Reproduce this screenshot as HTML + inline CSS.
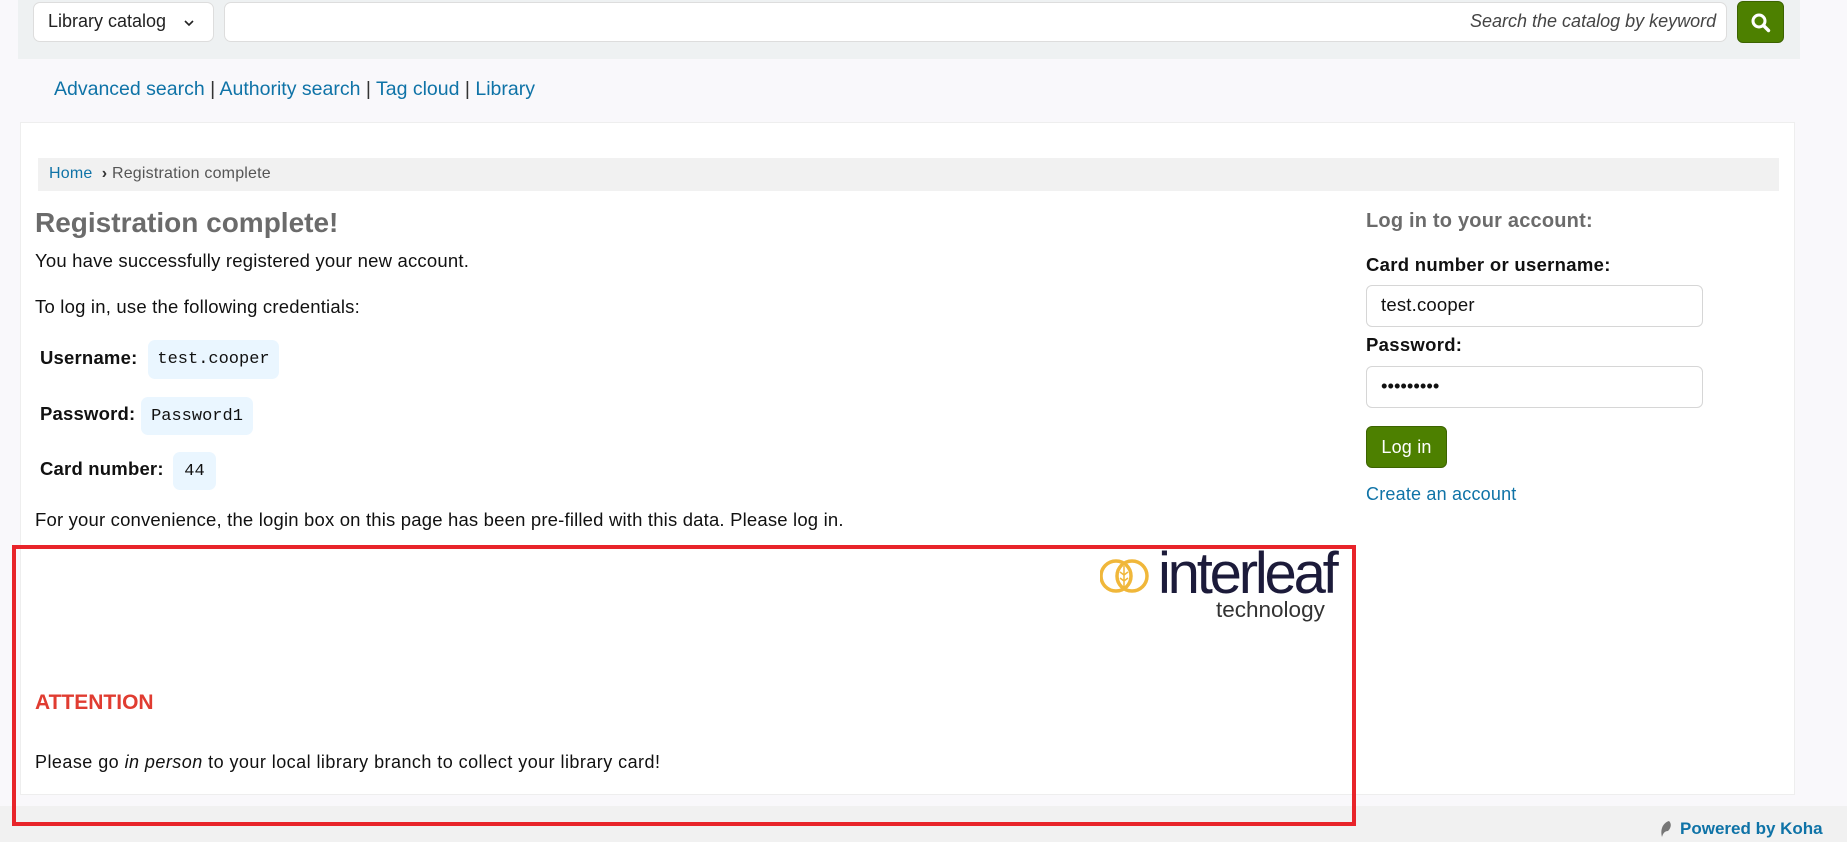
<!DOCTYPE html>
<html><head><meta charset="utf-8"><style>
*{box-sizing:border-box;margin:0;padding:0}
body{width:1847px;height:842px;overflow:hidden;background:#f9f8fb;font-family:"Liberation Sans",sans-serif;color:#111;position:relative;font-size:18.5px;letter-spacing:0.2px}
.a{position:absolute;white-space:nowrap}
a{color:#0f73a7;text-decoration:none}
.code{position:absolute;background:#eaf6ff;border-radius:7px;font-family:"Liberation Mono",monospace;font-size:17px;letter-spacing:0;display:flex;align-items:center;justify-content:center}
.inp{position:absolute;background:#fff;border:1px solid #d6d6d6;border-radius:6px}
b{font-weight:bold}
</style></head><body>
<div class="a" style="left:18px;top:0;width:1782px;height:59px;background:#eef1f2"></div>
<div class="inp" style="left:33px;top:2px;width:181px;height:40px;border-color:#ddd;border-radius:7px"></div>
<div class="a" style="left:48px;top:11px;font-size:18px;color:#222;letter-spacing:0">Library catalog</div>
<svg class="a" style="left:183px;top:18px" width="12" height="10" viewBox="0 0 12 10"><path d="M2 3l4 4 4-4" fill="none" stroke="#222" stroke-width="1.6"/></svg>
<div class="inp" style="left:224px;top:2px;width:1503px;height:40px;border-color:#ddd;border-radius:7px"></div>
<div class="a" style="left:1470px;top:11px;font-size:18px;font-style:italic;color:#444;letter-spacing:0">Search the catalog by keyword</div>
<div class="a" style="left:1737px;top:1px;width:47px;height:42px;background:#4d8000;border:1px solid #3c6300;border-radius:6px"></div>
<svg class="a" style="left:1750px;top:12px" width="22" height="22" viewBox="0 0 22 22"><circle cx="9" cy="9" r="6" fill="none" stroke="#fff" stroke-width="3"/><path d="M13.5 13.5l5 5" stroke="#fff" stroke-width="3.4" stroke-linecap="round"/></svg>
<div class="a" style="left:54px;top:78px;font-size:19.5px;color:#333;letter-spacing:0"><a>Advanced search</a> | <a>Authority search</a> | <a>Tag cloud</a> | <a>Library</a></div>
<div class="a" style="left:20px;top:122px;width:1775px;height:673px;background:#fff;border:1px solid #eee"></div>
<div class="a" style="left:38px;top:158px;width:1741px;height:33px;background:#f1f1f1"></div>
<div class="a" style="left:49px;top:165px;font-size:16px;color:#555;letter-spacing:0.2px"><a>Home</a> &nbsp;<b style="color:#333">›</b> Registration complete</div>
<div class="a" style="left:35px;top:207px;font-size:28px;font-weight:bold;color:#6b6b6b;letter-spacing:0">Registration complete!</div>
<div class="a" style="left:35px;top:250px">You have successfully registered your new account.</div>
<div class="a" style="left:35px;top:296px">To log in, use the following credentials:</div>
<div class="a" style="left:40px;top:347px"><b>Username:</b></div>
<div class="code" style="left:148px;top:340px;width:131px;height:39px">test.cooper</div>
<div class="a" style="left:40px;top:403px"><b>Password:</b></div>
<div class="code" style="left:141px;top:397px;width:112px;height:38px">Password1</div>
<div class="a" style="left:40px;top:458px"><b>Card number:</b></div>
<div class="code" style="left:173px;top:452px;width:43px;height:38px">44</div>
<div class="a" style="left:35px;top:509px;letter-spacing:0.18px">For your convenience, the login box on this page has been pre-filled with this data. Please log in.</div>
<div class="a" style="left:12px;top:545px;width:1344px;height:281px;border:4px solid #e8242a"></div>
<svg class="a" style="left:1100px;top:556px" width="52" height="40" viewBox="0 0 52 40"><circle cx="16" cy="20" r="15" fill="none" stroke="#f0b73a" stroke-width="3.5"/><circle cx="32" cy="20" r="15" fill="none" stroke="#f0b73a" stroke-width="3.5"/><path d="M24 10v22M20 16l4 3 4-3M20 22l4 3 4-3" stroke="#f0b73a" stroke-width="1.5" fill="none"/></svg>
<div class="a" style="left:1158px;top:540px;font-size:58px;letter-spacing:-3.2px;color:#1c1b3a">interleaf</div>
<div class="a" style="left:1216px;top:597px;font-size:22.5px;color:#333;letter-spacing:0">technology</div>
<div class="a" style="left:35px;top:691px;font-size:21px;font-weight:bold;color:#e03c31;letter-spacing:0">ATTENTION</div>
<div class="a" style="left:35px;top:752px;font-size:18px;letter-spacing:0.45px">Please go <i>in person</i> to your local library branch to collect your library card!</div>
<div class="a" style="left:0;top:806px;width:1847px;height:36px;background:#f1f1f1;z-index:-1"></div>
<svg class="a" style="left:1659px;top:820px" width="14" height="18" viewBox="0 0 14 18"><path d="M10 1C4 3 1 9 3 17c1-4 3-6 6-6 3-3 4-7 1-10z" fill="#777"/></svg>
<div class="a" style="left:1680px;top:819px;font-size:17px;font-weight:bold;color:#0f73a7;letter-spacing:0">Powered by Koha</div>
<div class="a" style="left:1366px;top:210px;font-size:20px;font-weight:bold;color:#6b6b6b">Log in to your account:</div>
<div class="a" style="left:1366px;top:254px;letter-spacing:0.3px"><b>Card number or username:</b></div>
<div class="inp" style="left:1366px;top:285px;width:337px;height:42px"></div>
<div class="a" style="left:1381px;top:294px">test.cooper</div>
<div class="a" style="left:1366px;top:334px;letter-spacing:0.3px"><b>Password:</b></div>
<div class="inp" style="left:1366px;top:366px;width:337px;height:42px"></div>
<div class="a" style="left:1381px;top:375px;letter-spacing:0">•••••••••</div>
<div class="a" style="left:1366px;top:426px;width:81px;height:42px;background:#4d8000;border:1px solid #3c6300;border-radius:6px;color:#fff;font-size:18px;display:flex;align-items:center;justify-content:center">Log in</div>
<div class="a" style="left:1366px;top:484px;font-size:18px"><a>Create an account</a></div>
</body></html>
